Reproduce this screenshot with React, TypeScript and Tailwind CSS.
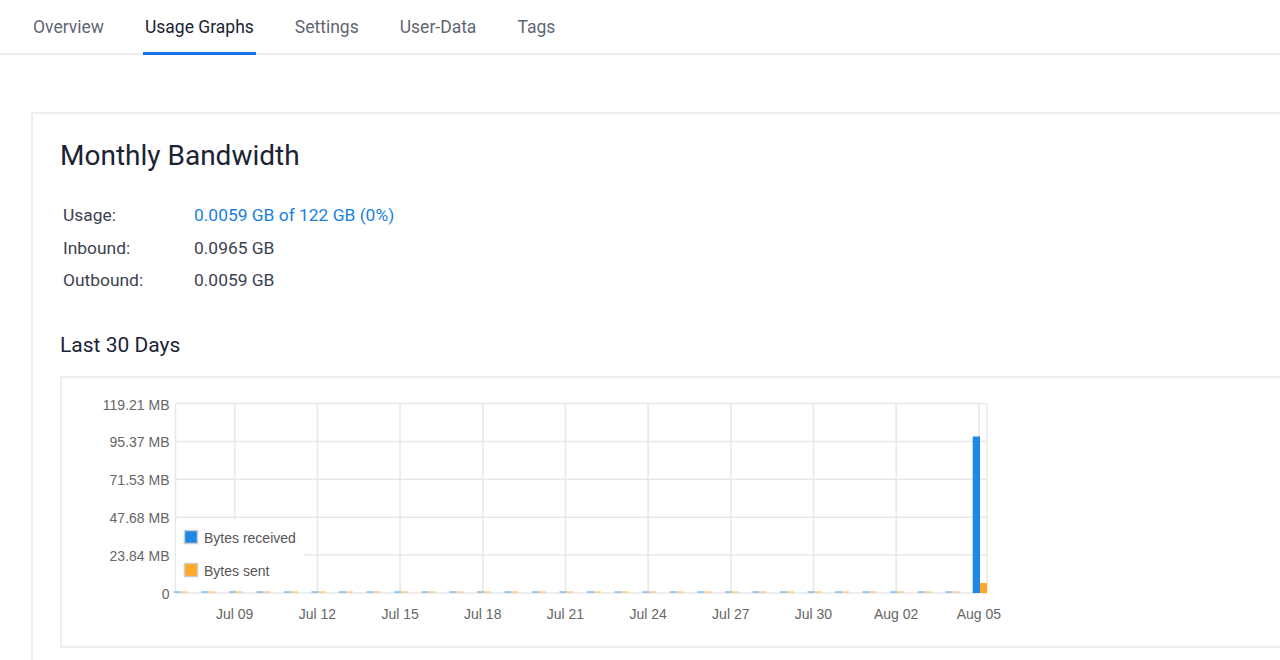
import React from "react";

const tabs = ["Overview", "Usage Graphs", "Settings", "User-Data", "Tags"];

function Chart() {
  const L = 113.5, T = 25.5, R = 925, B = 215;
  const yTicks = ["119.21 MB", "95.37 MB", "71.53 MB", "47.68 MB", "23.84 MB", "0"];
  const step = (B - T) / 5;
  const dayX = (i: number) => 117.6 + 27.56 * i;
  const xLabels = ["Jul 09", "Jul 12", "Jul 15", "Jul 18", "Jul 21", "Jul 24", "Jul 27", "Jul 30", "Aug 02", "Aug 05"];
  const font = "'Liberation Sans', Arial, sans-serif";
  return (
    <svg width="1220" height="271" className="block">
      {yTicks.map((t, i) => (
        <g key={t}>
          <line x1={L} x2={R} y1={T + step * i} y2={T + step * i} stroke="#e8e8e8" strokeWidth="1.5" />
          <text x={L - 6} y={T + step * i + 6} textAnchor="end" fontSize="14" fill="#666" fontFamily={font}>{t}</text>
        </g>
      ))}
      {xLabels.map((t, i) => {
        const x = dayX(2 + 3 * i);
        return (
          <g key={t}>
            <line x1={x} x2={x} y1={T} y2={B} stroke="#e8e8e8" strokeWidth="1.5" />
            <text x={x} y={B + 26} textAnchor="middle" fontSize="14" fill="#666" fontFamily={font}>{t}</text>
          </g>
        );
      })}
      <line x1={L} x2={L} y1={T} y2={B} stroke="#e8e8e8" strokeWidth="1.5" />
      <line x1={R} x2={R} y1={T} y2={B} stroke="#e8e8e8" strokeWidth="1.5" />
      {Array.from({ length: 29 }).map((_, i) => (
        <g key={i}>
          <rect x={dayX(i) - 6} y={B - 2} width="7" height="2" fill="#1e88e5" opacity="0.4" />
          <rect x={dayX(i) + 1} y={B - 2} width="7" height="2" fill="#ffa726" opacity="0.4" />
        </g>
      ))}
      <rect x={910.7} y={58.5} width="7.3" height={B - 58.5} fill="#1e88e5" />
      <rect x={918} y={205} width="7" height={B - 205} fill="#ffa726" />
      <rect x={114} y={142} width={128} height={70} fill="#fff" opacity="0.92" />
      <rect x={122.5} y={152.5} width="13" height="13" fill="#1e88e5" stroke="#ccc" strokeWidth="1.5" />
      <text x={142} y={165} fontSize="14" fill="#555" fontFamily={font}>Bytes received</text>
      <rect x={122.5} y={185.5} width="13" height="13" fill="#ffa726" stroke="#ccc" strokeWidth="1.5" />
      <text x={142} y={198} fontSize="14" fill="#555" fontFamily={font}>Bytes sent</text>
    </svg>
  );
}

export default function App() {
  return (
    <div className="min-h-[660px] bg-white overflow-hidden" style={{ fontFamily: "Roboto, 'Noto Sans', sans-serif" }}>
      <div className="flex h-[55px] border-b-2 border-[#eeeeee] pl-[31px] gap-[37px]">
        {tabs.map((t) => {
          const active = t === "Usage Graphs";
          return (
            <div
              key={t}
              className={
                "px-[2px] flex items-center text-[17.5px] -mb-[2px] border-b-[3px] pt-[2px] " +
                (active ? "border-[#1a73e8] text-[#1c2333]" : "border-transparent text-[#5f6673]")
              }
            >
              {t}
            </div>
          );
        })}
      </div>
      <div className="ml-[31px] mt-[57px] border-2 border-r-0 border-[#eeeeee] w-[1300px] pl-[27px] pt-[24px] pb-[20px]">
        <h1 className="text-[28px] text-[#1c2333] leading-[36px]">Monthly Bandwidth</h1>
        <div className="mt-[29px] text-[17.4px] text-[#3c4250] pl-[3px] flex flex-col gap-[8px] leading-[24.5px]">
          <div className="flex">
            <span className="w-[131px]">Usage:</span>
            <span className="text-[#1a7fe0]">0.0059 GB of 122 GB (0%)</span>
          </div>
          <div className="flex">
            <span className="w-[131px]">Inbound:</span>
            <span>0.0965 GB</span>
          </div>
          <div className="flex">
            <span className="w-[131px]">Outbound:</span>
            <span>0.0059 GB</span>
          </div>
        </div>
        <h2 className="mt-[38px] text-[21px] text-[#1c2333] leading-[28px]">Last 30 Days</h2>
        <div className="mt-[17px] border-2 border-r-0 border-[#eeeeee] h-[272px]">
          <Chart />
        </div>
      </div>
    </div>
  );
}
